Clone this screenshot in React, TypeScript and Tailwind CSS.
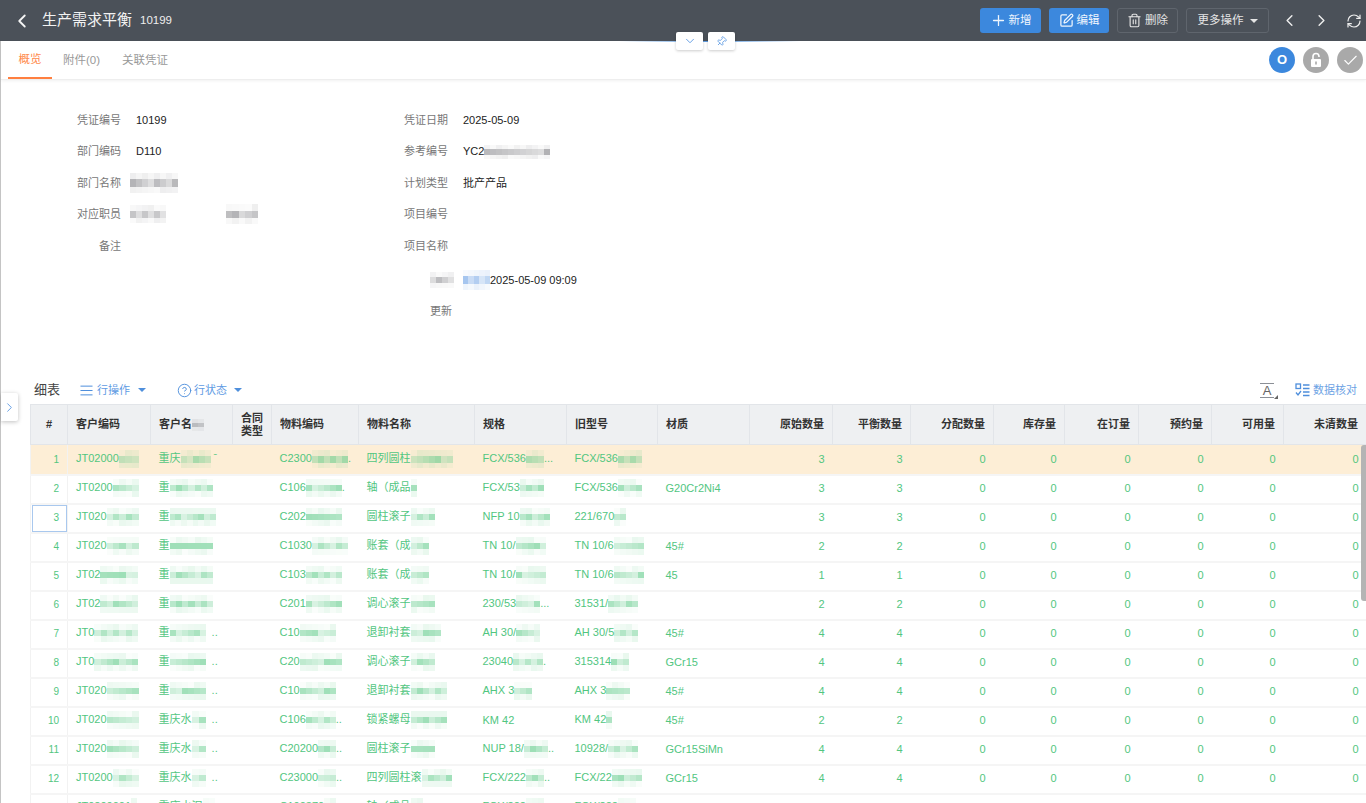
import { AlignJustify, Check, ChevronDown, ChevronLeft, ChevronRight, CircleHelp, Pin, Plus, RefreshCw, SquarePen, Trash2 } from 'lucide-react'

type Tone = 'green' | 'gray' | 'blue'
type Cell = [string, number?, string?]

const toneRgb: Record<Tone, string> = {
  green: '82,198,127',
  gray: '120,120,125',
  blue: '90,150,225',
}

// pixelated patch that hides a private value
function Mosaic({ w, seed = 1, tone = 'green', h = 18 }: { w: number; seed?: number; tone?: Tone; h?: number }) {
  const cols = Math.max(1, Math.round(w / 6))
  const blocks = []
  for (let r = 0; r < 3; r++) {
    for (let c = 0; c < cols; c++) {
      const n = Math.abs(Math.sin(seed * 12.9 + r * 78.2 + c * 37.7)) * 1000
      const rnd = n - Math.floor(n)
      const a = r === 1 ? 0.22 + rnd * 0.35 : 0.03 + rnd * 0.1
      blocks.push(<span key={`${r}-${c}`} className="block" style={{ background: `rgba(${toneRgb[tone]},${a})` }} />)
    }
  }
  return (
    <span
      className="inline-grid align-middle grid-rows-[1fr_1.2fr_1fr] blur-[0.5px]"
      style={{ width: w, height: h, gridTemplateColumns: `repeat(${cols}, 1fr)` }}
    >
      {blocks}
    </span>
  )
}

const columns = [
  { label: '#', w: 'w-[37px]', align: 'text-center' },
  { label: '客户编码', w: 'w-[83px]', align: 'text-left' },
  { label: '客户名', w: 'w-[82px]', align: 'text-left' },
  { label: '合同类型', w: 'w-[39px]', align: 'text-center' },
  { label: '物料编码', w: 'w-[87px]', align: 'text-left' },
  { label: '物料名称', w: 'w-[116px]', align: 'text-left' },
  { label: '规格', w: 'w-[92px]', align: 'text-left' },
  { label: '旧型号', w: 'w-[91px]', align: 'text-left' },
  { label: '材质', w: 'w-[92px]', align: 'text-left' },
  { label: '原始数量', w: 'w-[83px]', align: 'text-right' },
  { label: '平衡数量', w: 'w-[78px]', align: 'text-right' },
  { label: '分配数量', w: 'w-[83px]', align: 'text-right' },
  { label: '库存量', w: 'w-[71px]', align: 'text-right' },
  { label: '在订量', w: 'w-[74px]', align: 'text-right' },
  { label: '预约量', w: 'w-[73px]', align: 'text-right' },
  { label: '可用量', w: 'w-[72px]', align: 'text-right' },
  { label: '未清数量', w: 'w-[83px]', align: 'text-right' },
]

const dots = '\u00a0\u00a0..'

const rows: { cells: Cell[]; spec: string; qty: number }[] = [
  { cells: [['JT02000', 20], ['重庆', 30, '\u00a0ˉ'], ['C2300', 36, '.'], ['四列圆柱', 42, ''], ['FCX/536', 18, '...'], ['FCX/536', 24]], spec: '', qty: 3 },
  { cells: [['JT0200', 26], ['重', 44], ['C106', 36, '.'], ['轴（成品', 6], ['FCX/53', 24], ['FCX/536', 24]], spec: 'G20Cr2Ni4', qty: 3 },
  { cells: [['JT020', 32], ['重', 46], ['C202', 36], ['圆柱滚子', 24], ['NFP 10', 30], ['221/670', 12]], spec: '', qty: 3 },
  { cells: [['JT020', 32], ['重', 44], ['C1030', 36], ['账套（成', 18], ['TN 10/', 30], ['TN 10/6', 30]], spec: '45#', qty: 2 },
  { cells: [['JT02', 38], ['重', 44], ['C103', 36], ['账套（成', 18], ['TN 10/', 30], ['TN 10/6', 30]], spec: '45', qty: 1 },
  { cells: [['JT02', 38], ['重', 44], ['C201', 36], ['调心滚子', 24], ['230/53', 24, '...'], ['31531/', 30]], spec: '', qty: 2 },
  { cells: [['JT0', 44], ['重', 36, dots], ['C10', 36], ['退卸衬套', 30], ['AH 30/', 24], ['AH 30/5', 24]], spec: '45#', qty: 4 },
  { cells: [['JT0', 44], ['重', 36, dots], ['C20', 42], ['调心滚子', 24], ['23040', 30, '.'], ['315314', 18]], spec: 'GCr15', qty: 4 },
  { cells: [['JT020', 32], ['重', 36, dots], ['C10', 36], ['退卸衬套', 36], ['AHX 3', 18], ['AHX 3', 24]], spec: '45#', qty: 4 },
  { cells: [['JT020', 32], ['重庆水', 14, dots], ['C106', 30, '..'], ['锁紧螺母', 36], ['KM 42'], ['KM 42', 6]], spec: '45#', qty: 2 },
  { cells: [['JT020', 32], ['重庆水', 14, dots], ['C20200', 18, '..'], ['圆柱滚子', 24], ['NUP 18/', 24, '..'], ['10928/', 30]], spec: 'GCr15SiMn', qty: 4 },
  { cells: [['JT0200', 26], ['重庆水', 14, dots], ['C23000', 18, '..'], ['四列圆柱滚', 30], ['FCX/222', 18, '..'], ['FCX/22', 30]], spec: 'GCr15', qty: 4 },
  { cells: [['JT0200001', 6], ['重庆水泥', 12], ['C100370', 12], ['轴（成品', 12], ['FCX/222', 18], ['FCX/222', 18]], spec: 'G20Cr2Ni4', qty: 4 },
]

function DataCell({ cell, seed, tone = 'green' }: { cell: Cell; seed: number; tone?: Tone }) {
  const [text, patch, suffix] = cell
  return (
    <>
      {text}
      {patch ? <Mosaic w={patch} seed={seed} tone={tone} /> : null}
      {suffix}
    </>
  )
}

function FormRow({ label, children }: { label: string; children?: React.ReactNode }) {
  return (
    <div className="flex h-[31.5px] items-center">
      <div className="w-[100px] text-right text-[#777]">{label}</div>
      <div className="ml-[15px] text-[#222]">{children}</div>
    </div>
  )
}

export default function App() {
  return (
    <div className="relative h-[803px] w-[1366px] overflow-hidden bg-white text-[11px] font-['Liberation_Sans','Noto_Sans_CJK_SC',sans-serif]">
      {/* Header */}
      <header className="flex h-[41px] items-center bg-[#4b5159] pl-[11px] pr-[4px] text-white">
        <ChevronLeft size={22} strokeWidth={2} className="text-[#f5f5f5]" />
        <span className="ml-[9px] text-[15px] text-[#f2f2f2]">生产需求平衡</span>
        <span className="ml-[8px] text-[11.5px] text-[#eee]">10199</span>
        <div className="ml-auto flex items-center gap-2 text-[11.5px]">
          <button className="flex h-[25px] w-[61px] items-center justify-center gap-[2px] rounded-[3px] bg-[#3c88dd] text-[#eef5fd]">
            <Plus size={17} strokeWidth={1.8} />
            新增
          </button>
          <button className="flex h-[25px] w-[60px] items-center justify-center gap-[3px] rounded-[3px] bg-[#3c88dd] text-[#eef5fd]">
            <SquarePen size={15} strokeWidth={2} />
            编辑
          </button>
          <button className="flex h-[25px] w-[61px] items-center justify-center gap-[3px] rounded-[3px] border border-[#5f656d] text-[#e5e5e5]">
            <Trash2 size={15} strokeWidth={1.8} />
            删除
          </button>
          <button className="flex h-[25px] w-[83px] items-center justify-center gap-[6px] rounded-[3px] border border-[#5f656d] text-[#e5e5e5]">
            更多操作
            <span className="border-x-[4px] border-t-[4px] border-x-transparent border-t-[#e5e5e5]" />
          </button>
          <ChevronLeft size={19} strokeWidth={1.8} className="ml-[2.5px] text-[#eee]" />
          <ChevronRight size={19} strokeWidth={1.8} className="ml-[5px] text-[#eee]" />
          <RefreshCw size={16} strokeWidth={1.8} className="ml-[7.5px] text-[#eee]" />
        </div>
      </header>

      <div className="h-[762px] border-l border-[#c4c4c4]">
        {/* Tabs */}
        <div className="flex h-[39px] items-stretch border-b border-[#eeeeee] pl-[7px] pr-[3px] text-[11.5px] shadow-[0_1px_3px_rgba(0,0,0,0.06)]">
          <div className="flex w-[44px] items-center justify-center border-b-2 border-[#ff7f3f] pt-[2px] text-[#ff8a4c]">概览</div>
          <div className="ml-[11px] flex items-center pt-[1px] text-[#999]">附件(0)</div>
          <div className="ml-[22px] flex items-center pt-[1px] text-[#999]">关联凭证</div>
          <div className="ml-auto flex items-center gap-2">
            <span className="flex size-[26px] items-center justify-center rounded-full bg-[#3c88dd] text-[13px] font-bold text-white">O</span>
            <span className="flex size-[26px] items-center justify-center rounded-full bg-[#a9a9a9]">
              <svg viewBox="0 0 16 16" className="size-[16px]">
                <path d="M5 7V4.5a3 3 0 0 1 6 0V5" fill="none" stroke="#fff" strokeWidth="1.6" />
                <rect x="3" y="7" width="10" height="8" rx="1" fill="#fff" />
                <rect x="7.2" y="9.5" width="1.6" height="3" fill="#a9a9a9" />
              </svg>
            </span>
            <span className="flex size-[26px] items-center justify-center rounded-full bg-[#a9a9a9] text-white">
              <Check size={17} strokeWidth={1.6} />
            </span>
          </div>
        </div>

        {/* Form */}
        <div className="flex h-[300px] pl-[20px] pt-[24px]">
          <div className="w-[327px]">
            <FormRow label="凭证编号">10199</FormRow>
            <FormRow label="部门编码">D110</FormRow>
            <FormRow label="部门名称">
              <span className="-ml-[6px]"><Mosaic w={48} seed={3} tone="gray" h={20} /></span>
            </FormRow>
            <FormRow label="对应职员">
              <span className="-ml-[6px]"><Mosaic w={36} seed={4} tone="gray" /></span>
              <span className="ml-[60px]"><Mosaic w={32} seed={5} tone="gray" h={20} /></span>
            </FormRow>
            <FormRow label="备注" />
          </div>
          <div>
            <FormRow label="凭证日期">2025-05-09</FormRow>
            <FormRow label="参考编号">YC2<Mosaic w={66} seed={6} tone="gray" h={14} /></FormRow>
            <FormRow label="计划类型">批产产品</FormRow>
            <FormRow label="项目编号" />
            <FormRow label="项目名称" />
            <div className="mt-[1px] flex h-[35px] items-center pl-[82px]">
              <Mosaic w={24} seed={7} tone="gray" h={16} />
              <span className="ml-[9px]"><Mosaic w={27} seed={8} tone="blue" h={20} /></span>
              <span className="text-[#222]">2025-05-09 09:09</span>
            </div>
            <div className="flex h-[27px] items-center pl-[82px] text-[#777]">更新</div>
          </div>
        </div>

        {/* Detail toolbar */}
        <div className="flex h-[24px] items-center pb-[4px] pl-[33px] pr-[9px] text-[#5f9be3]">
          <span className="text-[13px] text-[#444]">细表</span>
          <AlignJustify size={15} strokeWidth={1.6} className="ml-[19px] text-[#4f8fdc]" />
          <span className="ml-[3px]">行操作</span>
          <span className="ml-[8px] border-x-[4px] border-t-[4px] border-x-transparent border-t-[#4f8fdc]" />
          <CircleHelp size={15} strokeWidth={1.5} className="ml-[31px] text-[#4f8fdc]" />
          <span className="ml-[2px]">行状态</span>
          <span className="ml-[7px] border-x-[4px] border-t-[4px] border-x-transparent border-t-[#4f8fdc]" />
          <span className="relative ml-auto flex h-[15px] w-[14px] items-center justify-center border-y border-[#8b8f96] text-[13px] leading-none text-[#666]">
            A
            <span className="absolute -right-[4px] -bottom-[2px] border-b-[4px] border-l-[4px] border-b-[#666] border-l-transparent" />
          </span>
          <svg viewBox="0 0 15 14" className="ml-[21px] h-[14px] w-[15px] text-[#4f8fdc]" fill="none" stroke="currentColor" strokeWidth="1.3">
            <rect x="1" y="1" width="4.5" height="4.5" />
            <path d="M1 9.5l2 2.5 3-4M8 2h6.5M8 5.5h6.5M8 9h6.5M8 12.5h6.5" />
          </svg>
          <span className="ml-[3px] text-[#6ca2e4]">数据核对</span>
        </div>

        {/* Detail table */}
        <div className="pl-[29px]">
          <table className="w-[1336px] table-fixed border-collapse">
            <colgroup>
              {columns.map((c) => (
                <col key={c.label} className={c.w} />
              ))}
            </colgroup>
            <thead>
              <tr className="h-[40px] bg-[#eef0f2]">
                {columns.map((c) => (
                  <th
                    key={c.label}
                    className={`border-x border-y border-[#e2e5e9] px-2 font-bold leading-[13px] text-[#333] ${c.align} ${c.label === '合同类型' ? 'px-0' : ''}`}
                  >
                    {c.label}
                    {c.label === '客户名' ? <Mosaic w={12} seed={2} tone="gray" h={12} /> : null}
                  </th>
                ))}
              </tr>
            </thead>
            <tbody className="text-[#52c67f]">
              {rows.map((row, i) => (
                <tr key={i} className={`border-b-2 border-[#f5f5f5] ${i === 0 ? 'h-[30px] bg-[#fdeed6]' : 'h-[29px] [&>td]:pb-[2px]'}`}>
                  <td className={`border-x px-2 text-right text-[10px] ${i === 2 ? 'border-[#f2f2f2] outline outline-1 -outline-offset-2 outline-[#a9c8ee]' : 'border-[#f2f2f2]'}`}>{i + 1}</td>
                  <td className="overflow-hidden whitespace-nowrap px-2"><DataCell cell={row.cells[0]} seed={i + 11} /></td>
                  <td className="overflow-hidden whitespace-nowrap px-2"><DataCell cell={row.cells[1]} seed={i + 31} /></td>
                  <td />
                  <td className="overflow-hidden whitespace-nowrap px-2"><DataCell cell={row.cells[2]} seed={i + 51} /></td>
                  <td className="overflow-hidden whitespace-nowrap px-2"><DataCell cell={row.cells[3]} seed={i + 71} /></td>
                  <td className="overflow-hidden whitespace-nowrap px-2"><DataCell cell={row.cells[4]} seed={i + 91} /></td>
                  <td className="overflow-hidden whitespace-nowrap px-2"><DataCell cell={row.cells[5]} seed={i + 111} /></td>
                  <td className="whitespace-nowrap px-2">{row.spec}</td>
                  <td className="px-2 text-right">{row.qty}</td>
                  <td className="px-2 text-right">{row.qty}</td>
                  <td className="px-2 text-right">0</td>
                  <td className="px-2 text-right">0</td>
                  <td className="px-2 text-right">0</td>
                  <td className="px-2 text-right">0</td>
                  <td className="px-2 text-right">0</td>
                  <td className="px-2 text-right">0</td>
                </tr>
              ))}
            </tbody>
          </table>
        </div>
      </div>

      {/* Collapse handle over the header edge */}
      <div className="absolute left-[620px] top-[41px] h-px w-[180px] bg-gradient-to-r from-transparent via-[#5b9ae0] to-transparent" />
      <div className="absolute left-[676px] top-[32px] flex gap-[5px]">
        <span className="flex h-[18px] w-[27px] items-center justify-center rounded-[2px] bg-white text-[#5f9be3] shadow-[0_1px_3px_rgba(0,0,0,0.2)]">
          <ChevronDown size={14} strokeWidth={1.6} />
        </span>
        <span className="flex h-[18px] w-[27px] items-center justify-center rounded-[2px] bg-white text-[#5f9be3] shadow-[0_1px_3px_rgba(0,0,0,0.2)]">
          <Pin size={11} strokeWidth={1.8} className="rotate-45" />
        </span>
      </div>

      {/* Side expand tab */}
      <span className="absolute left-px top-[393px] flex h-[28px] w-[17px] items-center justify-center rounded-r-[2px] bg-white text-[#5f9be3] shadow-[0_1px_4px_rgba(0,0,0,0.25)]">
        <ChevronRight size={15} strokeWidth={1.5} />
      </span>

      {/* Table scrollbar */}
      <span className="absolute right-0 top-[445px] h-[156px] w-[5px] rounded-l-[3px] bg-[#b4b4b4]" />
    </div>
  )
}
